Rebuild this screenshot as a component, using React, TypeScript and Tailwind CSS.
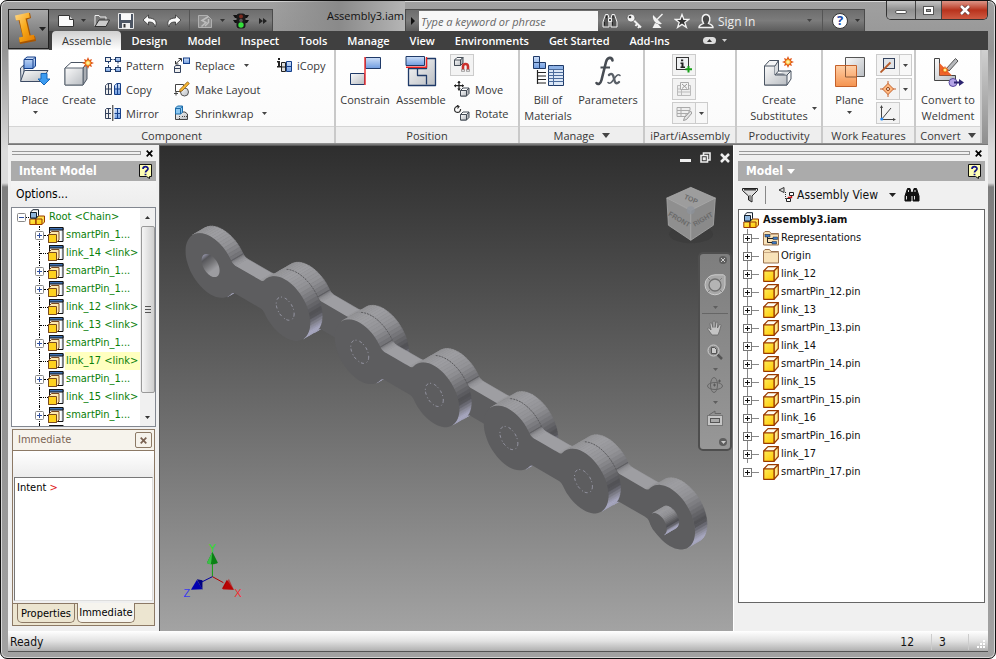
import { useState } from "react";
import type { ReactNode } from "react";
import { clsx } from "clsx";

type IconProps = { className?: string };

const NAVY = "#1f3a68";

/* ---------- shared bits ---------- */

const Caret = ({ className = "text-[#444]" }: IconProps) => (
  <svg viewBox="0 0 5 3" className={clsx("h-[3px] w-[5px] shrink-0", className)} fill="currentColor">
    <path d="M0 0h5L2.500 3z" />
  </svg>
);

const Grad = () => (
  <svg className="absolute h-0 w-0" aria-hidden="true">
    <defs>
      <linearGradient id="blue" x1="0" y1="0" x2="0" y2="1">
        <stop offset="0" stopColor="#cfe0f8" />
        <stop offset="1" stopColor="#6f9ce0" />
      </linearGradient>
      <linearGradient id="steel" x1="0" y1="0" x2="1" y2="1">
        <stop offset="0" stopColor="#fafafa" />
        <stop offset="1" stopColor="#b9bdc2" />
      </linearGradient>
      <linearGradient id="orange" x1="0" y1="0" x2="0" y2="1">
        <stop offset="0" stopColor="#ffcfa6" />
        <stop offset="1" stopColor="#f5934f" />
      </linearGradient>
      <linearGradient id="yellow" x1="0" y1="0" x2="1" y2="1">
        <stop offset="0" stopColor="#ffec5a" />
        <stop offset="1" stopColor="#ffc800" />
      </linearGradient>
      <linearGradient id="gold" x1="0" y1="0" x2="1" y2="1">
        <stop offset="0" stopColor="#ffd98a" />
        <stop offset="0.5" stopColor="#f8a818" />
        <stop offset="1" stopColor="#e07800" />
      </linearGradient>
    </defs>
  </svg>
);

const Spark = ({ x, y, s = 1 }: { x: number; y: number; s?: number }) => (
  <g transform={`translate(${x} ${y}) scale(${s})`}>
    <path d="M0-6 1.300-3 4-4 3-1.300 6 0 3 1.300 4 4 1.300 3 0 6-1.300 3-4 4-3 1.300-6 0-3-1.300-4-4-1.300-3z" fill="#e0571a" />
    <circle r="2.300" fill="#fff2a0" stroke="#f5a623" />
  </g>
);

/* ---------- small ribbon icons (16x16) ---------- */

const Svg16 = ({ children }: { children: ReactNode }) => (
  <svg viewBox="0 0 16 16" className="size-4 shrink-0" fill="none">
    {children}
  </svg>
);

const PatternIcon = () => (
  <Svg16>
    <g stroke={NAVY}>
      <rect x="0.500" y="0.500" width="5" height="4" fill="#eee" />
      <rect x="10.500" y="0.500" width="5" height="4" fill="url(#blue)" />
      <rect x="0.500" y="10.500" width="5" height="4" fill="url(#blue)" />
      <rect x="10.500" y="10.500" width="5" height="4" fill="url(#blue)" />
      <path d="M6 2.500h1.500m1 0H10M3.500 5v1.500m0 1.500V10M13 5v1.500m0 1.500V10M6 12.500h1.500m1 0H10" />
    </g>
  </Svg16>
);

const CopyIcon = () => (
  <Svg16>
    <path d="M1.500 3.500 3 2.500h3.500v11h-6v-9z" fill="#eee" stroke="#33415c" />
    <path d="M10.500 3.500 12 2.500h3.500v11h-6v-9z" fill="url(#blue)" stroke="#16408a" />
    <path d="M.5 8h6M3.500 3v10" stroke="#33415c" />
    <path d="M9.500 8h6M12.500 3v10" stroke="#16408a" />
  </Svg16>
);

const MirrorIcon = () => (
  <Svg16>
    <path d="M6 3.500H1.500l-1 1v9H6M.5 8.500H6M3.500 3.500v10" fill="#eee" stroke="#33415c" />
    <path d="M9.500 3.500h6v10h-6M9.500 8.500h6M12.500 3.500v10" fill="url(#blue)" stroke="#16408a" />
    <path d="M7.800 0v16" stroke="#222" />
  </Svg16>
);

const ReplaceIcon = () => (
  <Svg16>
    <path d="M.5 9.500 2 8.500h4.500v7h-6z" fill="#eee" stroke="#33415c" />
    <path d="M.5 11.500h6" stroke="#33415c" />
    <rect x="9.500" y="1" width="6" height="5.500" fill="url(#blue)" stroke="#16408a" />
    <path d="M2 6.500 7 2M4.500 1.500H7.500v3M1.500 4v3h3" stroke="#333" />
  </Svg16>
);

const LayoutIcon = () => (
  <Svg16>
    <path d="M1.500 3.500h8v7h-8z" fill="#fff" stroke="#444" />
    <path d="M0 12.500h4M2 10.500v4" stroke="#444" />
    <circle cx="10.500" cy="11" r="4" fill="url(#steel)" stroke="#555" />
    <path d="M13.500.8 15.300 2.500 8 10l-2.500.8.6-2.500z" fill="#f7b733" stroke="#8a5a12" strokeWidth="0.800" />
  </Svg16>
);

const ShrinkIcon = () => (
  <Svg16>
    <path d="M1.500 7.500v7h12V9L11 7H8z" fill="url(#steel)" stroke="#444" />
    <path d="M1.500 3 3.500 1h5v6.500L6.500 9h-5z" fill="#8cc7f0" stroke="#1c6ba8" />
    <path d="M1.500 3.500h5V9M6.500 3.500 8.500 1" stroke="#1c6ba8" />
    <path d="M5.500 11v3M8 11.500h5" stroke="#444" strokeDasharray="1 1" />
  </Svg16>
);

const ICopyIcon = () => (
  <Svg16>
    <path d="M5.500 5.500h4v9h-4zM5.500 10h4" fill="#ddd" stroke="#222" />
    <path d="M10.500 4.500h5v10h-5zM10.500 9.500h5" fill="url(#blue)" stroke="#16408a" />
    <path d="M2 1h2v2H2zM1 4h3v5h1.500v1.500H1V9h1V5.500H1z" fill="#222" />
  </Svg16>
);

const MiniCube = ({ x, y }: { x: number; y: number }) => (
  <g transform={`translate(${x} ${y})`} stroke="#444c56" strokeLinejoin="round">
    <path d="M.5 3 3 .5h6L6.500 3v5.500h-6z" fill="#fff" />
    <path d="M6.500 3 9 .5V6L6.500 8.500z" fill="#b5b9be" />
    <path d="M.5 3h6v5.500h-6z" fill="url(#steel)" />
  </g>
);

const MoveIcon = () => (
  <Svg16>
    <MiniCube x={6} y={6.500} />
    <path d="M5 0v9.500M.3 4.700h9.400" stroke="#222" strokeWidth="1.300" />
    <path d="M3.200 2 5 0l1.800 2zM3.200 7.500 5 9.500l1.800-2zM2 3 0 4.700l2 1.800zM8 3l2 1.700-2 1.800z" fill="#222" />
  </Svg16>
);

const RotateIcon = () => (
  <Svg16>
    <MiniCube x={6} y={6.500} />
    <path d="M4 1.500A3 3 0 1 0 6.500 4M3 0l2 1.500L3.500 3.500" stroke="#333" strokeWidth="1.200" />
  </Svg16>
);

const GripSnapIcon = () => (
  <Svg16>
    <MiniCube x={0} y={0} />
    <path d="M9 14V9.500a2.500 2.500 0 0 1 5 0V14" stroke="#c9302c" strokeWidth="2.600" />
    <path d="M7.500 12.500h3v2h-3zM12.500 12.500h3v2h-3z" fill="#ddd" stroke="#777" strokeWidth="0.500" />
  </Svg16>
);

const CreateIPartIcon = () => (
  <Svg16>
    <rect x="0.500" y="0.500" width="12" height="12" fill="#eef0f2" stroke="#333" />
    <path d="M5 2.500h2.200v1.800H5zM4.500 5.500h3v4H9V11H4.500V9.500h1V7h-1z" fill="#222" />
    <path d="M12.500 9v6.500M9.500 12.300H16" stroke="#18a018" strokeWidth="2" />
  </Svg16>
);

const SheetIcon = () => (
  <Svg16>
    <path d="M1.500 4.500h13v10h-13zM1.500 8h13M1.500 11h13M5.500 8v6" stroke="#bbb" fill="#eee" />
    <path d="M4.500 1.500h8v7h-8z" fill="#f3f3f3" stroke="#aaa" />
    <path d="m6 3 5 4.500M11 3 6 7.500" stroke="#999" />
  </Svg16>
);

const EditSheetIcon = () => (
  <Svg16>
    <path d="M1 2.500h13v3H1zM1 5.500h12v3H1zM1 8.500h9v3H1zM5 2.500v9" stroke="#aaa" fill="#eee" />
    <path d="m14.500 6-6 6.500-1 3 3-1L16 8z" fill="#e2e2e2" stroke="#999" />
  </Svg16>
);

const AxisIcon = () => (
  <Svg16>
    <rect x="3.500" y="1.500" width="11" height="10" fill="#dfe3e7" stroke="#33415c" />
    <path d="m.5 15.500 10-10" stroke="#b65a28" strokeWidth="1.800" />
  </Svg16>
);

const PointIcon = () => (
  <Svg16>
    <path d="M8 2.500 13.500 8 8 13.500 2.500 8z" fill="#ffb880" stroke="#c4612a" />
    <circle cx="8" cy="8" r="1.500" fill="#fff" stroke="#8a3c10" />
    <path d="M8 0v3m0 10v3M0 8h3m10 0h3" stroke="#c4612a" />
  </Svg16>
);

const UcsIcon = () => (
  <Svg16>
    <path d="M1.500 1v13.500H15M1.500 14.500 11 3" stroke="#444" />
    <path d="m0 3 1.500-3L3 3zM13 13l3 1.500-3 1.500z" fill="#444" />
    <circle cx="1.800" cy="14" r="1.600" fill="#2a8af0" />
  </Svg16>
);

/* ---------- large ribbon icons (32x32) ---------- */

const Svg32 = ({ children }: { children: ReactNode }) => (
  <svg viewBox="0 0 32 32" className="size-8 shrink-0 overflow-visible" fill="none" strokeLinejoin="round">
    {children}
  </svg>
);

const PlaceIcon = () => (
  <Svg32>
    <path d="M1.500 12 5 9v14l-3 2z" fill="#dfe3e8" stroke="#3b4a63" />
    <path d="M5.500 14.500H29L22 25.500H1.500z" fill="url(#steel)" stroke="#3b4a63" />
    <path d="M5 3.500 8 1h8.500v9L14 12.500H5z" fill="url(#blue)" stroke="#16408a" />
    <path d="M5 3.500h9v9M14 3.500 16.500 1" stroke="#16408a" />
    <path d="M22 17.500h6V23h3l-6 6-6-6h3z" fill="#3c9bf0" stroke="#1666b8" />
  </Svg32>
);

const CreateIcon = () => (
  <Svg32>
    <path d="M2 12 8 6.500h16L20 12v17H2z" fill="#fff" stroke="#4b5563" />
    <path d="m20 12 4-4v15l-4 6z" fill="#a9adb3" stroke="#4b5563" />
    <path d="M2 12h18v17H2z" fill="url(#steel)" stroke="#5b6470" />
    <Spark x={25} y={7} />
  </Svg32>
);

const ConstrainIcon = () => (
  <Svg32>
    <rect x="16.500" y="1.500" width="15" height="11" fill="url(#blue)" stroke={NAVY} />
    <rect x="1.500" y="17.500" width="14" height="11" fill="url(#steel)" stroke={NAVY} />
    <path d="M16 1v28" stroke="#e33" strokeWidth="1.500" />
  </Svg32>
);

const AssembleIcon = () => (
  <Svg32>
    <path d="M3.500 12.500h18v-10h9v27h-27z" fill="url(#steel)" stroke={NAVY} strokeWidth="1.300" />
    <path d="M12.500 12.500v7h9v9" stroke={NAVY} strokeWidth="1.300" />
    <rect x="1" y="0.500" width="18.500" height="9" fill="url(#blue)" stroke={NAVY} />
    <path d="M1 11.300h20.500V1" stroke="#e22" strokeWidth="1.400" />
  </Svg32>
);

const BomIcon = () => (
  <Svg32>
    <path d="M1.500.5h6v6h-6zM1.500 6.500h6v6h-6zM7.500 6.500h6v6h-6z" fill="url(#blue)" stroke={NAVY} />
    <path d="M5.500 14v14M5.500 16.500H14M5.500 20H14M5.500 23.500H14M5.500 27H14" stroke="#222" strokeWidth="1.200" />
    <rect x="16.500" y="9.500" width="15" height="20" fill="#dce8f7" stroke={NAVY} />
    <path d="M16.500 13.500h15M16.500 16.500h15M16.500 19.500h15M16.500 22.500h15M16.500 25.500h15M21.500 9.500v20" stroke="#4b6b9b" />
    <path d="M17 10h14v3H17z" fill="#8fb3e6" />
  </Svg32>
);

// cursive f with a smaller x on its foot
const FxIcon = () => (
  <Svg32>
    <path d="M20.500 4.500C20 1 15.500.5 14 6L9.500 24c-1 4-3.500 5-5 3" stroke="#474c53" strokeWidth="2.600" strokeLinecap="round" />
    <path d="M8.500 11.500H18" stroke="#474c53" strokeWidth="2" />
    <path d="M17 19c3-2.500 4.200-.5 5 3.500s2 6.500 5 3.500" stroke="#5a6068" strokeWidth="2.400" strokeLinecap="round" />
    <path d="M28 19.500c-2-2-4 .5-6 3.500s-4 5.500-6 3.500" stroke="#5a6068" strokeWidth="1.600" strokeLinecap="round" />
  </Svg32>
);

const SubstitutesIcon = () => (
  <Svg32>
    <path d="m1.500 10 5-5.500h9L13.500 10v8h8l3-3h3.500v8l-4 6H1.500z" fill="#f4f5f6" stroke="#4b5563" />
    <path d="M1.500 10h10.500v9h12v10H1.500z" fill="url(#steel)" stroke="#4b5563" />
    <path d="M12 10 15.500 4.500V15L12 19M15.500 15H28l-4 4" stroke="#4b5563" fill="#d9dcdf" />
    <Spark x={25} y={6} />
  </Svg32>
);

const PlaneIcon = () => (
  <Svg32>
    <rect x="11.500" y="1.500" width="19" height="19" fill="url(#steel)" stroke="#555" />
    <rect x="1.500" y="9.500" width="21" height="21" fill="url(#orange)" stroke="#c4612a" />
    <path d="M11.500 10v11h11" stroke="#8a5a3a" />
  </Svg32>
);

const WeldIcon = () => (
  <Svg32>
    <path d="M2.500 2.500h5v17h16v5h-21z" fill="url(#steel)" stroke="#444" />
    <path d="M7.500 7v12.500H20z" fill="#f0642a" />
    <path d="M23.500 2.500 26 5 17 15l-3-2z" fill="#b8babd" stroke="#555" />
    <Spark x={13} y={14} s={0.700} />
    <circle cx="21" cy="26.500" r="4" fill="#b3a3e6" stroke="#5a4aa0" />
    <path d="M22 26.500h8" stroke="#2c2470" strokeWidth="2" />
    <path d="m27 23 5 3.500-5 3.500z" fill="#2c2470" />
  </Svg32>
);

/* ---------- title bar icons ---------- */

const AppLogo = () => (
  <svg viewBox="0 0 28 34" className="h-[34px] w-7" fill="none">
    <path d="M4 4 18 1l1 5-4 1.500 4 17 4-.5 1 5-16 3-1-5 4-1.500L6.500 8 4 8.500z" fill="#a85500" />
    <path d="M3 3.500 17 .5l.8 5-4.300 1 4 17 4.500-.8.800 4.500-15 3-.8-4.700 4-.8L7.500 8 4 8.500z" fill="url(#gold)" />
  </svg>
);

const NewIcon = () => (
  <Svg16>
    <path d="M.5 2.500h11l4 4v7H.5z" fill="#fafafa" stroke="#333" />
    <path d="M11.500 2.500v4h4" fill="#ccc" stroke="#333" />
  </Svg16>
);
const OpenIcon = () => (
  <Svg16>
    <path d="M1 13V2.500h4l1 1.500h6v3" fill="#777" stroke="#eee" />
    <path d="M1 13.500 5 7h10.500L12 13.500z" fill="#ccc" stroke="#333" />
  </Svg16>
);
const SaveIcon = () => (
  <Svg16>
    <path d="M.5.5h15v15h-15z" fill="#4d5664" stroke="#e8e8e8" />
    <path d="M3 1h10v6H3z" fill="#fafafa" />
    <path d="M4 10h8v5.500H4z" fill="#eee" />
    <path d="M5.500 11h2v3.500h-2z" fill="#333" />
  </Svg16>
);
const UndoIcon = () => (
  <Svg16>
    <path d="M6.500 2 1 7l5.500 5V9c4 0 6 1 6.500 5 3-5 0-9-6.500-9z" fill="#fafafa" stroke="#333" strokeWidth="0.800" />
  </Svg16>
);
const RedoIcon = () => (
  <Svg16>
    <path d="M9.500 2 15 7l-5.500 5V9c-4 0-6 1-6.500 5-3-5 0-9 6.500-9z" fill="#fafafa" stroke="#333" strokeWidth="0.800" />
  </Svg16>
);
const UpdateIcon = () => (
  <Svg16>
    <path d="M1.500 2.500h9l4 4v8h-13z" fill="#8c8c8c" stroke="#b0b0b0" />
    <path d="M11.500 3.500 5 7.500l4 2-4.500 4M11.500 6v3.500L8 13" stroke="#bdbdbd" strokeWidth="1.500" />
  </Svg16>
);
const TrafficIcon = () => (
  <Svg16>
    <path d="M0 2h4v3H2zM16 2h-4v3h2zM0 7h4v3H2zM16 7h-4v3h2z" fill="#111" />
    <rect x="3.500" y="0.500" width="9" height="15" rx="3" fill="#1a1a1a" />
    <circle cx="8" cy="3.500" r="2" fill="#7a2b20" />
    <circle cx="8" cy="7.500" r="1.800" fill="#555" />
    <circle cx="8" cy="12" r="2.700" fill="#35e03c" />
  </Svg16>
);
const BinocularsIcon = ({ dark }: { dark?: boolean }) => (
  <Svg16>
    <g fill={dark ? "#111" : "#555"} stroke={dark ? "#111" : "#f2f2f2"}>
      <path d="M3.500 1.500h2.500l1 4v8.500H1V9zM12.500 1.500H10l-1 4v8.500h6V9z" />
      <path d="M6.500 5.500h3v3h-3z" />
    </g>
    <path d="M2.500 9v3.500M10.500 9v3.500M4.500 3v2M11 3v2" stroke={dark ? "#ddd" : "#222"} />
  </Svg16>
);
const KeyIcon = () => (
  <Svg16>
    <path d="m7.500 7 7.500 7.500M11 11l-1.500 2M13.500 13l-1.500 2" stroke="#f2f2f2" strokeWidth="2" />
    <circle cx="5" cy="5" r="4" fill="#f2f2f2" stroke="#444" strokeWidth="0.600" />
    <circle cx="4" cy="4" r="1.300" fill="#444" />
  </Svg16>
);
const DishIcon = () => (
  <Svg16>
    <path d="M3 2c-1 5 3 10 9 9z" fill="#f2f2f2" />
    <path d="M7 6.500 12.500 1" stroke="#f2f2f2" strokeWidth="1.500" />
    <path d="M5 10 2.500 15h9L8 11" fill="#f2f2f2" />
  </Svg16>
);
const StarIcon = () => (
  <Svg16>
    <path d="m8 1.500 1.800 4.800h5L10.800 9.400l1.600 5L8 11.400l-4.400 3 1.600-5-4-3.100h5z" fill="#333" stroke="#f2f2f2" strokeWidth="1.300" />
  </Svg16>
);
const UserIcon = () => (
  <Svg16>
    <path d="M1 14.500c0-3 3-3 4.500-4C3 7 4 1.500 8 1.500S13 7 10.500 10.500c1.500 1 4.500 1 4.500 4z" fill="#4a4a4a" stroke="#f2f2f2" strokeWidth="1.400" />
  </Svg16>
);

/* ---------- tree icons ---------- */

const PartIcon = () => (
  <Svg16>
    <g stroke="#9a3a00" strokeLinejoin="round" strokeWidth="1.200">
      <path d="M.7 5 5 .7h10.300L11 5z" fill="#fffdf0" />
      <path d="m11 5 4.300-4.300V10.500L11 15.300z" fill="#ffe98a" />
      <path d="M.7 5H11v10.300H.7z" fill="url(#yellow)" />
    </g>
  </Svg16>
);

const AssemblyIcon = () => (
  <Svg16>
    <g strokeLinejoin="round">
      <path d="M6 9.500 8.500 7h7v6L13 15.500H6z" fill="#ffe14d" stroke="#9a3a00" />
      <path d="M.8 10h6v5.500h-6zM7 10h6v5.500H7z" fill="url(#yellow)" stroke="#9a3a00" />
      <path d="M1.500 3 4 .7h5.500V6.500L7.500 9h-6z" fill="#fff" stroke="#15202e" />
      <path d="M1.500 3.500h6V9h-6z" fill="#8fb6dd" stroke="#15202e" />
    </g>
  </Svg16>
);

const FolderIcon = ({ reps }: { reps?: boolean }) => (
  <Svg16>
    <path d="M.5 15V3L2 1.500h4.500L8 3.500h7.500V15z" fill="#f8e2b8" stroke="#9a7350" />
    <path d="M1 4.500h14.500" stroke="#c9a987" />
    {reps && (
      <>
        <path d="M4.500 6v6.500H9M4.500 8.500H10" stroke="#222" />
        <path d="M2 4.500h5v2.500H2zM10 7h4.500v2.500H10zM9 11.500h4.500V14H9z" fill="#3b79c9" stroke="#222" strokeWidth="0.500" />
      </>
    )}
  </Svg16>
);

const IntentIcon = () => (
  <Svg16>
    <path d="M1.500.5h13.500v14H1.500z" fill="#e8edf6" stroke="#111" />
    <path d="M1.500.5h13.500v2.500H1.500z" fill="#3f72b5" stroke="#111" />
    <path d="M11 4h2v10h-2z" fill="#fff" />
    <path d="M.5 7.500 3.500 4.500h7.500v8.500l-2.500 2.500h-8z" fill="#ffe9b0" stroke="#7a4a20" />
    <path d="M.5 7.500h8v8h-8z" fill="#ffd21f" stroke="#7a4a20" />
  </Svg16>
);

const HelpNote = () => (
  <svg viewBox="0 0 14 15" className="h-[15px] w-3.5" fill="none">
    <path d="M.5.5h12v12h-2v2l-3-2h-7z" fill="#ffffb4" stroke="#111" />
    <path d="M4 5c0-3 5-3 5-.3C9 6.500 6.500 6.500 6.500 8.500" stroke="#14148a" strokeWidth="1.700" />
    <path d="M5.600 9.700h1.800v1.600H5.600z" fill="#14148a" />
  </svg>
);

const CloseX = ({ className = "text-black" }: IconProps) => (
  <svg viewBox="0 0 7 7" className={clsx("size-[7px]", className)} fill="none" stroke="currentColor" strokeWidth="1.700">
    <path d="m.7.700 5.600 5.600M6.300.7.700 6.300" />
  </svg>
);

/* ---------- ribbon pieces ---------- */

interface LargeProps {
  icon: ReactNode;
  lines: string[];
  caret?: boolean;
  className?: string;
}

const LargeButton = ({ icon, lines, caret, className }: LargeProps) => (
  <button className={clsx("flex shrink-0 flex-col items-center pt-[6px] leading-4", className)}>
    {icon}
    <span className="mt-1 whitespace-nowrap text-center">
      {lines.map((line) => (
        <span key={line} className="block">
          {line}
        </span>
      ))}
    </span>
    {caret && <Caret className="mt-[3px] text-[#444]" />}
  </button>
);

const SmallButton = ({ icon, label, caret }: { icon: ReactNode; label: string; caret?: boolean }) => (
  <button className="flex h-6 items-center gap-[5px] whitespace-nowrap">
    {icon}
    <span className="pt-0.5">{label}</span>
    {caret && <Caret className="ml-1 text-[#444]" />}
  </button>
);

const BoxButton = ({ icon, label, caret }: { icon: ReactNode; label: string; caret?: boolean }) => (
  <div className="flex h-6 items-center">
    <button aria-label={label} className="flex h-[22px] w-6 items-center justify-center border border-[#ccc] bg-[#f3f3f3]">
      {icon}
    </button>
    {caret && (
      <button aria-label={`${label} options`} className="flex h-[22px] w-3 items-center justify-center border border-l-0 border-[#ccc] bg-[#f8f8f8]">
        <Caret />
      </button>
    )}
  </div>
);

const Panel = ({ title, caret, className, children }: { title: string; caret?: boolean; className: string; children: ReactNode }) => (
  <section className={clsx("flex shrink-0 flex-col border-r-2 border-[#c9c9c9]", className)}>
    <div className="flex h-[76px] bg-linear-to-b from-white to-[#fbfbfb]">{children}</div>
    <h2 className="flex h-[17px] items-center justify-center gap-[7px] whitespace-nowrap border-t border-[#d5d5d5] bg-[#eee]">
      <span className="pt-0.5">{title}</span>
      {caret && (
        <svg viewBox="0 0 8 5" className="h-[5px] w-2" fill="#444">
          <path d="M0 0h8L4 5z" />
        </svg>
      )}
    </h2>
  </section>
);

const Ribbon = () => (
  <div className="flex h-[95px] shrink-0 overflow-hidden border-b border-[#777] bg-[#b5b5b5] bg-linear-to-b from-[#d0d0d0] to-[#8e8e8e] pb-px pl-px text-[11px] text-[#383838]">
    <Panel title="Component" className="w-[327px]">
      <LargeButton icon={<PlaceIcon />} lines={["Place"]} caret className="ml-1 w-11" />
      <LargeButton icon={<CreateIcon />} lines={["Create"]} className="w-11" />
      <div className="ml-1 w-[69px] pt-[3px]">
        <SmallButton icon={<PatternIcon />} label="Pattern" />
        <SmallButton icon={<CopyIcon />} label="Copy" />
        <SmallButton icon={<MirrorIcon />} label="Mirror" />
      </div>
      <div className="w-[102px] pt-[3px]">
        <SmallButton icon={<ReplaceIcon />} label="Replace" caret />
        <SmallButton icon={<LayoutIcon />} label="Make Layout" />
        <SmallButton icon={<ShrinkIcon />} label="Shrinkwrap" caret />
      </div>
      <div className="pt-[3px]">
        <SmallButton icon={<ICopyIcon />} label="iCopy" />
      </div>
    </Panel>
    <Panel title="Position" className="w-[184px]">
      <LargeButton icon={<ConstrainIcon />} lines={["Constrain"]} className="ml-px w-14" />
      <LargeButton icon={<AssembleIcon />} lines={["Assemble"]} className="w-14" />
      <div className="ml-px pt-[3px]">
        <BoxButton icon={<GripSnapIcon />} label="Grip Snap" />
        <div className="ml-1">
          <SmallButton icon={<MoveIcon />} label="Move" />
          <SmallButton icon={<RotateIcon />} label="Rotate" />
        </div>
      </div>
    </Panel>
    <Panel title="Manage" caret className="w-[125px]">
      <LargeButton icon={<BomIcon />} lines={["Bill of", "Materials"]} className="w-14" />
      <LargeButton icon={<FxIcon />} lines={["Parameters"]} className="w-16" />
    </Panel>
    <Panel title="iPart/iAssembly" className="w-[92px]">
      <div className="ml-[27px] pt-[3px]">
        <BoxButton icon={<CreateIPartIcon />} label="Create iPart" />
        <BoxButton icon={<SheetIcon />} label="Edit using spreadsheet" />
        <BoxButton icon={<EditSheetIcon />} label="Edit member" caret />
      </div>
    </Panel>
    <Panel title="Productivity" className="w-[86px]">
      <LargeButton icon={<SubstitutesIcon />} lines={["Create", "Substitutes"]} className="ml-2 w-[68px]" />
      <Caret className="-ml-px mt-[57px] text-[#444]" />
    </Panel>
    <Panel title="Work Features" className="w-[93px]">
      <LargeButton icon={<PlaneIcon />} lines={["Plane"]} caret className="w-[53px]" />
      <div className="pt-[3px]">
        <BoxButton icon={<AxisIcon />} label="Axis" caret />
        <BoxButton icon={<PointIcon />} label="Point" caret />
        <BoxButton icon={<UcsIcon />} label="UCS" />
      </div>
    </Panel>
    <Panel title="Convert" caret className="w-[66px]">
      <LargeButton icon={<WeldIcon />} lines={["Convert to", "Weldment"]} className="w-16" />
    </Panel>
  </div>
);

/* ---------- title bar and tabs ---------- */

const tabs = ["Assemble", "Design", "Model", "Inspect", "Tools", "Manage", "View", "Environments", "Get Started", "Add-Ins"];

const toolStrip = "mt-2 flex h-[22px] items-center bg-linear-to-b from-[#6d6d6d] via-[#7c7c7c] to-[#5c5c5c] border-t border-[#4a4a4a]";

const Header = () => {
  const [active, setActive] = useState("Assemble");

  return (
    <header className="flex h-[49px] shrink-0">
      <button
        aria-label="Application menu"
        className="mt-2 flex h-10 w-[41px] shrink-0 items-center border border-[#222] bg-linear-to-b from-[#a8a8a8] to-[#686868] pl-[3px]"
      >
        <AppLogo />
        <svg viewBox="0 0 7 4" className="-ml-px h-1 w-[7px]" fill="#222">
          <path d="M0 0h7L3.500 4z" />
        </svg>
      </button>
      <div className="flex min-w-0 flex-1 flex-col">
        <div className="flex h-[30px] items-start">
          <div className={clsx(toolStrip, "w-56 shrink-0 border-r pl-[9px]")}>
            <button aria-label="New"><NewIcon /></button>
            <Caret className="ml-[7px] text-[#333]" />
            <button aria-label="Open" className="ml-2"><OpenIcon /></button>
            <button aria-label="Save" className="ml-2"><SaveIcon /></button>
            <button aria-label="Undo" className="ml-2"><UndoIcon /></button>
            <button aria-label="Redo" className="ml-2"><RedoIcon /></button>
            <span className="ml-[7px] h-full w-px bg-[#555]" />
            <button aria-label="Update" className="ml-[7px]"><UpdateIcon /></button>
            <Caret className="ml-[7px] text-[#333]" />
            <button aria-label="Rebuild" className="ml-2"><TrafficIcon /></button>
            <svg viewBox="0 0 8 6" className="ml-2.5 h-1.5 w-2" fill="#222">
              <path d="M0 0l4 3-4 3zM4 0l4 3-4 3z" />
            </svg>
          </div>
          <div className="flex h-full flex-1 justify-end bg-linear-to-r from-transparent via-[#8a8a8a] to-[#b5b5b5] pr-px pt-[7px] text-[11px] text-[#111]">
            Assembly3.iam
          </div>
          <div className={clsx(toolStrip, "w-[460px] shrink-0 border-x")}>
            <svg viewBox="0 0 4 8" className="ml-[5px] mr-1 h-2 w-1" fill="#111">
              <path d="M0 0l4 4-4 4z" />
            </svg>
            <input
              type="text"
              aria-label="Search help"
              placeholder="Type a keyword or phrase"
              className="h-5 w-[179px] bg-[#f7f7f7] px-[2px] pt-0.5 text-[11px] italic placeholder:text-[#666]"
            />
            <button aria-label="Search" className="ml-1"><BinocularsIcon /></button>
            <button aria-label="Subscription" className="ml-2"><KeyIcon /></button>
            <button aria-label="Communication" className="ml-2"><DishIcon /></button>
            <button aria-label="Favorites" className="ml-2"><StarIcon /></button>
            <button className="ml-2 flex items-center gap-1 text-[12px] text-[#eee]">
              <UserIcon />
              <span className="pt-0.5">Sign In</span>
            </button>
            <Caret className="ml-auto mr-2.5 text-[#444]" />
            <span className="h-full w-px bg-[#555]" />
            <button
              aria-label="Help"
              className="ml-[9px] flex size-4 items-center justify-center rounded-full border border-[#333] bg-white text-[13px] font-bold leading-none text-[#1c4aa8]"
            >
              ?
            </button>
            <Caret className="ml-[7px] mr-1 text-[#333]" />
          </div>
          <div className="ml-[21px] flex h-[19px] w-[102px] shrink-0 overflow-hidden rounded-b-[5px] border border-t-0 border-[#333]">
            <button aria-label="Minimize" className="flex w-[29px] items-center justify-center border-r border-[#444] bg-linear-to-b from-[#c4c4c4] via-[#8f8f8f] to-[#a5a5a5]">
              <span className="mt-1 h-1 w-3 rounded-sm border border-[#555] bg-white" />
            </button>
            <button aria-label="Maximize" className="flex w-[26px] items-center justify-center border-r border-[#444] bg-linear-to-b from-[#c4c4c4] via-[#8f8f8f] to-[#a5a5a5]">
              <span className="flex h-[9px] w-[11px] items-center justify-center border border-[#555] bg-white">
                <span className="h-[3px] w-[5px] border border-[#555] bg-[#999]" />
              </span>
            </button>
            <button aria-label="Close" className="flex flex-1 items-center justify-center bg-linear-to-b from-[#dc9486] via-[#b8321c] to-[#cf5a42]">
              <svg viewBox="0 0 12 10" className="h-2.5 w-3" fill="none">
                <path d="m2 1 8 8M10 1 2 9" stroke="#5b3a36" strokeWidth="4" />
                <path d="m2 1 8 8M10 1 2 9" stroke="#fff" strokeWidth="2.500" />
              </svg>
            </button>
          </div>
        </div>
        <nav className="flex h-[19px] items-center bg-[#404040] pl-[3px] text-[11px] font-semibold text-white">
          {tabs.map((tab) => (
            <button
              key={tab}
              onClick={() => setActive(tab)}
              className={clsx(
                "h-full whitespace-nowrap px-[10px] pt-0.5",
                tab === active && "rounded-t-sm bg-linear-to-b from-[#d0d0d0] to-white font-normal text-[#333]"
              )}
            >
              {tab}
            </button>
          ))}
          <button aria-label="Minimize ribbon" className="ml-[23px] flex h-[7px] w-[13px] items-center justify-center rounded-sm bg-[#ddd]">
            <Caret className="rotate-180 text-[#333]" />
          </button>
          <Caret className="ml-1.5 text-[#ccc]" />
        </nav>
      </div>
    </header>
  );
};

/* ---------- side panels ---------- */

const Grip = () => (
  <div className="flex h-4 shrink-0 items-center gap-[5px] pl-1 pr-[6px]">
    <div className="flex flex-1 flex-col gap-0.5 border-r border-[#999]">
      <span className="h-px bg-[#999]" />
      <span className="h-px bg-[#999]" />
    </div>
    <button aria-label="Close panel">
      <CloseX />
    </button>
  </div>
);

const PanelTitle = ({ title, caret }: { title: string; caret?: boolean }) => (
  <div className="mx-[3px] flex h-5 shrink-0 items-center bg-[#ababab] pl-2 pr-[3px] text-[12px] font-bold text-white">
    {title}
    {caret && (
      <svg viewBox="0 0 8 5" className="ml-1 h-[5px] w-2" fill="#fff">
        <path d="M0 0h8L4 5z" />
      </svg>
    )}
    <button aria-label={`${title} help`} className="ml-auto">
      <HelpNote />
    </button>
  </div>
);

const Expander = ({ sign, soft, className }: { sign: "+" | "-"; soft?: boolean; className: string }) => (
  <svg viewBox="0 0 9 9" className={clsx("relative size-[9px] shrink-0", className)} fill="none">
    <rect x="0.500" y="0.500" width="8" height="8" rx={soft ? 1 : 0} fill="#fff" stroke="currentColor" />
    <path d={sign === "+" ? "M2 4.500h5M4.500 2v5" : "M2 4.500h5"} stroke={soft ? "#2f4f9f" : "#111"} />
  </svg>
);

const intentNodes = [
  { name: "smartPin_1...", open: true },
  { name: "link_14 <link>" },
  { name: "smartPin_1...", open: true },
  { name: "smartPin_1...", open: true },
  { name: "link_12 <link>" },
  { name: "link_13 <link>" },
  { name: "smartPin_1...", open: true },
  { name: "link_17 <link>", selected: true },
  { name: "smartPin_1...", open: true },
  { name: "link_15 <link>" },
  { name: "smartPin_1...", open: true },
  { name: "" },
];

const IntentTree = () => (
  <div className="mx-[3px] flex h-[220px] shrink-0 border border-[#828790] bg-white">
    <ul className="min-w-0 flex-1 overflow-hidden text-[11px] leading-[18px] text-[#0a800a]">
      <li className="flex h-[18px] items-center whitespace-nowrap pl-[5px]">
        <Expander sign="-" soft className="text-[#888]" />
        <span className="w-[3px] border-t border-dotted border-black" />
        <AssemblyIcon />
        <span className="ml-1">Root &lt;Chain&gt;</span>
      </li>
      {intentNodes.map((node, i) => (
        <li key={i} className="ml-[27px] flex h-[18px] items-center whitespace-nowrap border-l border-dotted border-black">
          {node.open ? (
            <>
              <Expander sign="+" soft className="-ml-[5px] text-[#888]" />
              <span className="w-1 border-t border-dotted border-black" />
            </>
          ) : (
            <span className="w-2 border-t border-dotted border-black" />
          )}
          <IntentIcon />
          <span className={clsx("ml-px h-full flex-1 pl-px", node.selected && "bg-[#ffffbf]")}>{node.name}</span>
        </li>
      ))}
    </ul>
    <div className="flex w-[15px] shrink-0 flex-col items-center bg-[#f0f0f0]">
      <button aria-label="Scroll up" className="flex h-[18px] items-center">
        <Caret className="rotate-180 text-[#333]" />
      </button>
      <div className="flex h-[167px] w-[14px] flex-col items-center justify-center gap-0.5 rounded-[2px] border border-[#999] bg-linear-to-r from-[#f5f5f5] to-[#cfcfcf]">
        <span className="h-px w-1.5 bg-[#555]" />
        <span className="h-px w-1.5 bg-[#555]" />
        <span className="h-px w-1.5 bg-[#555]" />
      </div>
      <button aria-label="Scroll down" className="mt-auto flex h-[18px] items-center">
        <Caret className="text-[#333]" />
      </button>
    </div>
  </div>
);

const ImmediatePanel = () => (
  <div className="mx-1 mb-[5px] mt-[2px] flex min-h-0 flex-1 flex-col border border-[#8c7965] bg-[#f0f0f0] text-[11px]">
    <div className="flex h-[21px] items-center justify-between border-b border-[#8c7965] bg-[#f6f3ec] pl-[5px] pr-0.5 text-[#7a6252]">
      Immediate
      <button aria-label="Close Immediate" className="flex h-4 w-[17px] items-center justify-center rounded-[2px] border border-[#8c7965]">
        <CloseX className="text-[#7a6252]" />
      </button>
    </div>
    <div className="h-[26px] bg-linear-to-b from-white to-[#ececec]" />
    <div className="mx-px flex min-h-0 flex-1 border border-b-[#ddd] border-l-[#777] border-r-[#ddd] border-t-[#777] bg-white pl-0.5 pt-0.5 leading-4">
      <label htmlFor="intent" className="text-black">
        Intent <span className="text-[#e02020]">&gt;</span>
      </label>
      <input id="intent" type="text" className="h-4 min-w-0 flex-1 outline-none" />
    </div>
    <div className="mt-0.5 flex h-[22px] items-start border-t border-[#8c7965] bg-[#ece5d0] pl-1">
      <button className="h-[19px] w-[58px] rounded-b-[5px] border border-t-0 border-[#8c7965] pt-0.5">Properties</button>
      <button className="-mt-px ml-0.5 h-5 w-[58px] rounded-b-[5px] border border-t-0 border-[#8c7965] bg-[#f6f4ee] pt-0.5">Immediate</button>
    </div>
  </div>
);

const modelNodes = [
  { name: "Representations", icon: <FolderIcon reps /> },
  { name: "Origin", icon: <FolderIcon /> },
  ...["12", "13", "14", "15", "16", "17"].flatMap((n) => [
    { name: `link_${n}`, icon: <PartIcon /> },
    { name: `smartPin_${n}.pin`, icon: <PartIcon /> },
  ]),
];

const ModelPanel = () => (
  <aside className="flex w-[255px] shrink-0 flex-col border-l border-white bg-[#f0f0f0] pl-px">
    <Grip />
    <PanelTitle title="Model" caret />
    <div className="flex h-7 shrink-0 items-center pl-[7px] text-[12px] text-[#111]">
      <button aria-label="Filter">
        <Svg16>
          <path d="M.5 1.500h15v2L10 9v6L6.500 13V9L.5 3.500z" fill="#ddd" stroke="#222" />
          <path d="M2 2h12v1.500H2z" fill="#444" />
          <path d="M8 8v6" stroke="#444" />
        </Svg16>
      </button>
      <span className="ml-[7px] h-[18px] w-px bg-[#888]" />
      <button className="ml-3 flex items-center gap-[3px]">
        <Svg16>
          <path d="M1 3 6 .5v5z" fill="#ddd" stroke="#333" />
          <path d="M7.500 5v7h1" stroke="#333" strokeDasharray="1 1" />
          <path d="M13.500 6.500v4h-3V13" stroke="#d01818" strokeWidth="1.400" />
          <path d="M11.500 5.500h4v3h-4zM8.500 11.500h4v3h-4z" fill="#fff" stroke="#222" />
        </Svg16>
        <span>Assembly View</span>
        <svg viewBox="0 0 7 4" className="ml-2 h-1 w-[7px]" fill="#222">
          <path d="M0 0h7L3.500 4z" />
        </svg>
      </button>
      <button aria-label="Find" className="ml-2">
        <BinocularsIcon dark />
      </button>
    </div>
    <div className="mx-[3px] mb-7 flex-1 border border-[#666] bg-white">
      <ul className="pl-1 pt-px text-[11px] leading-[18px] text-[#111]">
        <li className="flex h-[18px] items-center gap-1 font-bold">
          <AssemblyIcon />
          Assembly3.iam
        </li>
        {modelNodes.map((node, i) => (
          <li
            key={node.name}
            className={clsx("ml-1 flex h-[18px] items-center border-l", i === modelNodes.length - 1 ? "border-transparent" : "border-[#888]")}
          >
            <Expander sign="+" className="-ml-[5px] text-[#777]" />
            <span className="mr-1 h-px w-[7px] bg-[#888]" />
            {node.icon}
            <span className="ml-0.5">{node.name}</span>
          </li>
        ))}
      </ul>
    </div>
  </aside>
);

/* ---------- 3D chain ---------- */

type Pt = [number, number];

const HUB = 29;
const DEPTH: Pt = [12, -7];
const pins: Pt[] = Array.from({ length: 7 }, (_, i) => [210.7 + 74.7 * i, 265.300 + 43.200 * i]);

// normal angle (degrees clockwise from straight up) -> shade
const shades: [number, number[]][] = [
  [-180, [120, 120, 130]],
  [-60, [134, 134, 136]],
  [-30, [150, 150, 153]],
  [0, [158, 158, 162]],
  [30, [146, 146, 150]],
  [55, [112, 112, 116]],
  [78, [77, 77, 81]],
  [98, [138, 138, 152]],
  [114, [170, 170, 196]],
  [180, [150, 150, 170]],
];

const shade = (deg: number) => {
  const i = Math.max(1, shades.findIndex(([d]) => d >= deg));
  const [d0, c0] = shades[i - 1];
  const [d1, c1] = shades[i];
  const t = (deg - d0) / (d1 - d0);
  return `rgb(${c0.map((c, k) => Math.round(c + (c1[k] - c) * t)).join(",")})`;
};

const arc = (cx: number, cy: number, r: number, from: number, to: number, steps: number): Pt[] =>
  Array.from({ length: steps + 1 }, (_, i) => {
    const a = ((from + ((to - from) * i) / steps) * Math.PI) / 180;
    return [cx + r * Math.cos(a), cy + r * Math.sin(a)];
  });

// link outline in its own plane, clockwise from the left hub
const LEN = 86.2;
const linkOutline: Pt[] = [
  ...arc(28.7, -20, 6, 145, 90, 6),
  ...arc(LEN - 28.7, -20, 6, 90, 35, 6),
  ...arc(LEN, 0, HUB, -145, 145, 48),
  ...arc(LEN - 28.7, 20, 6, -35, -90, 6),
  ...arc(28.7, 20, 6, -90, -145, 6),
  ...arc(0, 0, HUB, 35, 325, 48),
];
const circleOutline = (r: number) => arc(0, 0, r, 0, 360, 48);

const project = ([u, v]: Pt, [ox, oy]: Pt): Pt => [ox + u * 0.866, oy + u * 0.5 + v];
const points = (list: Pt[]) => list.map(([x, y]) => `${x.toFixed(1)},${y.toFixed(1)}`).join(" ");

const Solid = ({ outline, origin }: { outline: Pt[]; origin: Pt }) => {
  const face = outline.map((p) => project(p, origin));

  return (
    <g>
      {outline.map((p, i) => {
        const j = (i + 1) % outline.length;
        const [a, b] = [face[i], face[j]];
        const facing = (b[1] - a[1]) * DEPTH[0] - (b[0] - a[0]) * DEPTH[1];
        if (facing <= 0.01) return null;

        const du = outline[j][0] - p[0];
        const dv = outline[j][1] - p[1];
        const fill = shade((Math.atan2(dv, du) * 180) / Math.PI);
        return (
          <polygon
            key={i}
            points={points([a, b, [b[0] + DEPTH[0], b[1] + DEPTH[1]], [a[0] + DEPTH[0], a[1] + DEPTH[1]]])}
            fill={fill}
            stroke={fill}
            strokeWidth="0.600"
          />
        );
      })}
      <polygon points={points(face)} fill="#5d5d5f" />
    </g>
  );
};

const Chain = () => (
  <g>
    {[1, 3, 5].map((i) => (
      <Solid key={i} outline={linkOutline} origin={[pins[i][0] + DEPTH[0], pins[i][1] + DEPTH[1]]} />
    ))}
    {[0, 2, 4].map((i) => (
      <Solid key={i} outline={linkOutline} origin={pins[i]} />
    ))}
    <Solid outline={circleOutline(10)} origin={pins[6]} />
    <polygon points={points(circleOutline(10.4).map((p) => project(p, pins[0])))} fill="url(#bore)" />
    {pins.slice(1, 6).map((pin, i) => (
      <g key={i} fill="none">
        <polyline
          points={points(arc(0, 0, HUB, -115, -32, 20).map((p) => project(p, [pin[0] + DEPTH[0], pin[1] + DEPTH[1]])))}
          stroke="#5a5a5d"
          strokeDasharray="2 1"
        />
        <polyline
          points={points(circleOutline(10.4).map((p) => project(p, pin)))}
          stroke="#a5a5b5"
          strokeWidth="0.800"
          strokeDasharray="3 2 1 3"
        />
      </g>
    ))}
  </g>
);

const ViewCube = () => (
  <g>
    <ellipse cx="692" cy="234" rx="22" ry="9" fill="#333" opacity="0.350" />
    <g transform="translate(1 0)">
      <g stroke="#a8a8a8" strokeLinejoin="round" strokeWidth="0.800">
        <path d="m690.700 187 24.600 10.700-24.600 12.500-24-12.500z" fill="#9d9d9d" />
        <path d="m666.700 197.700 24 12.500V240l-22.400-15z" fill="#8f8f8f" />
        <path d="m715.300 197.700-24.600 12.500V240l22.600-15z" fill="#8a8a8a" />
      </g>
      <circle cx="690.700" cy="210" r="4" fill="#8d939b" opacity="0.700" />
      <g fontFamily="Liberation Sans, sans-serif" fontSize="7" fontWeight="bold" fill="#6a6a6a" textAnchor="middle">
        <text transform="translate(690 201) rotate(24)">TOP</text>
        <text transform="translate(678 221) rotate(30)">FRONT</text>
        <text transform="translate(704 221) rotate(-30)">RIGHT</text>
      </g>
    </g>
  </g>
);

const Triad = () => (
  <g>
    <path d="M212.500 577v-14" stroke="#12a012" />
    <path d="m212.500 577 11 6" stroke="#b00000" />
    <path d="m212.500 577-12 6" stroke="#0000a0" />
    <path d="m212.500 552-5.500 11c2 2 9 2 11 0z" fill="#0a8014" />
    <path d="m212.500 552-5.500 11c1 1 2 1.500 4 1.500z" fill="#3cc048" />
    <path d="m234 590-7-10-5 9z" fill="#b00000" />
    <path d="m229 579 5 11-11 0z" fill="#c00808" opacity="0.600" />
    <path d="m191 590 6-10 5.500 9.500z" fill="#0000b0" />
    <path d="m197 579.500 5.500 1v9.500z" fill="#000080" />
    <g fontFamily="Liberation Sans, sans-serif" fontSize="11" textAnchor="middle">
      <text x="212.500" y="552" fill="#28e028">Y</text>
      <text x="238" y="597" fill="#f03030">X</text>
      <text x="187" y="597" fill="#3a3aee">Z</text>
    </g>
  </g>
);

const NavBar = () => (
  <div className="absolute right-px top-[106px] flex h-[199px] w-[34px] flex-col items-center rounded-[5px] border-2 border-[#4e4e4e] bg-linear-to-b from-[#7e7e7e] to-[#979797] text-[#5e5e5e]">
    <button aria-label="Close navigation bar" className="mr-[3px] mt-[2px] flex size-2 items-center justify-center self-end rounded-full bg-[#5e5e5e]">
      <svg viewBox="0 0 4 4" className="size-1" stroke="#ccc"><path d="m0 0 4 4M4 0 0 4" /></svg>
    </button>
    <button aria-label="Steering wheel" className="mt-[10px]">
      <svg viewBox="0 0 22 22" className="size-[22px]" fill="none">
        <path d="M11 .8H19.500L21 2.300V11A10 10 0 1 1 11 .8z" fill="#a8a8a8" stroke="#cdcdcd" />
        <circle cx="11" cy="11" r="6" fill="#b4b4b4" stroke="#707070" strokeWidth="1.300" />
        <path d="m4 4 3 3M4 18l3-3M18 18l-3-3M18 4l-3 3" stroke="#808080" />
      </svg>
    </button>
    <Caret className="mt-[10px]" />
    <span className="mt-1 h-px w-[26px] bg-[#666]" />
    <button aria-label="Pan" className="mt-[6px]">
      <Svg16>
        <path d="M5 15 1 9.500c-.8-1.300.7-2 1.600-1L4 10 3 4c-.2-1.500 1.500-1.800 1.900-.3L6 7.500V2c0-1.500 2-1.500 2 0v5.500l1-4.700c.3-1.400 2-1.100 1.800.4L10.500 8l1.600-3c.8-1.200 2.200-.5 1.800.8L12.500 11 11 15z" fill="#c4c4c4" stroke="#666" strokeWidth="0.800" />
      </Svg16>
    </button>
    <button aria-label="Zoom" className="mt-2">
      <Svg16>
        <path d="m10.500 10.500 4.500 4.500" stroke="#555" strokeWidth="2.500" />
        <circle cx="6.500" cy="6.500" r="5.500" fill="#8c8c8c" stroke="#d0d0d0" />
        <path d="M4.500 3.500h3l2 2v4h-5z" fill="#ccc" stroke="#555" />
      </Svg16>
    </button>
    <Caret className="mt-2" />
    <button aria-label="Orbit" className="mt-[6px]">
      <Svg16>
        <ellipse cx="8" cy="9" rx="7.500" ry="3.500" stroke="#666" />
        <ellipse cx="7" cy="8" rx="3.500" ry="7.500" stroke="#666" />
        <path d="M6 8h3M7.500 6.500v3M11 4h3M12.500 2.500v3" stroke="#5a5a5a" />
      </Svg16>
    </button>
    <Caret className="mt-2" />
    <button aria-label="Look at" className="mt-[6px]">
      <Svg16>
        <path d="M2 5 8 1v2.500h6" stroke="#666" />
        <rect x="0.500" y="5.500" width="15" height="10" fill="#c6c6c6" stroke="#777" />
        <rect x="3.500" y="8.500" width="9" height="4" fill="#aaa" stroke="#555" />
      </Svg16>
    </button>
    <span className="mb-[3px] mr-[3px] mt-auto flex size-2 items-center justify-center self-end rounded-full bg-[#5e5e5e]">
      <Caret className="text-[#ccc]" />
    </span>
  </div>
);

const Viewport = () => (
  <main className="relative min-w-0 flex-1 overflow-hidden border-l border-t border-[#5a5a5a] bg-linear-to-b from-[#2e2e2e] to-[#a3a3a3]">
    <svg viewBox="160 146 574 485" className="h-full w-full" fill="none">
      <defs>
        <linearGradient id="bore" x1="0" y1="0" x2="0.600" y2="1">
          <stop offset="0" stopColor="#b0b0cc" />
          <stop offset="0.250" stopColor="#56565a" />
          <stop offset="0.500" stopColor="#727275" />
          <stop offset="0.800" stopColor="#9c9ca0" />
        </linearGradient>
      </defs>
      <Chain />
      <ViewCube />
      <Triad />
    </svg>
    <div className="absolute right-[3px] top-[6px] flex items-center gap-[9px] text-white">
      <button aria-label="Minimize document" className="mt-1.5 h-[3px] w-[11px] bg-[#eee]" />
      <button aria-label="Restore document">
        <svg viewBox="0 0 11 11" className="size-[11px]" fill="none" stroke="#eee" strokeWidth="1.600">
          <path d="M1 3.500h6.500V10H1zM3.500 3V1H10v7H8" />
          <path d="M3.500 6h1.500v1.500H3.500z" />
        </svg>
      </button>
      <button aria-label="Close document">
        <svg viewBox="0 0 10 10" className="size-[10px]" stroke="#eee" strokeWidth="2.500">
          <path d="m1 1 8 8M9 1 1 9" />
        </svg>
      </button>
    </div>
    <NavBar />
  </main>
);

/* ---------- app ---------- */

export default function App() {
  return (
    <div className="bg-white">
      <Grad />
      <div className="flex h-screen min-h-[640px] flex-col overflow-hidden rounded-[7px] border border-[#111] bg-[linear-gradient(180deg,#a0a0a0_0px,#959595_50px,#dcdcdc_150px,#dcdcdc_182px,#7d7d7d_186px,#8c8c8c_320px,#a2a2a2_100%)] px-[7px] pb-[6px] font-['Open_Sans','Noto_Sans',sans-serif] shadow-[inset_0_0_0_1px_#d8d8d8]">
        <Header />
        <Ribbon />
        <div className="flex min-h-0 flex-1 font-['DejaVu_Sans_Condensed','DejaVu_Sans',sans-serif]">
          <aside className="flex w-[151px] shrink-0 flex-col bg-[#f0f0f0]">
            <Grip />
            <PanelTitle title="Intent Model" />
            <div className="mx-[3px] flex h-[26px] shrink-0 items-center bg-linear-to-b from-[#f4f4f4] to-[#ededed] pl-[5px] text-[12px]">
              <button>Options...</button>
            </div>
            <IntentTree />
            <ImmediatePanel />
          </aside>
          <Viewport />
          <ModelPanel />
        </div>
        <footer className="flex h-[21px] shrink-0 items-center border-b border-[#555] bg-linear-to-b from-white via-[#e2e2e2] to-[#b0b0b0] pl-0.5 pt-0.5 font-['DejaVu_Sans_Condensed','DejaVu_Sans',sans-serif] text-[12px] text-[#111]">
          Ready
          <span className="ml-auto mr-[17px]">12</span>
          <span className="h-4 w-[38px] border-x border-[#ccc] pl-[7px] leading-4">3</span>
          <svg viewBox="0 0 8 8" className="ml-2 mr-[3px] mt-1 size-2" fill="#fff">
            <path d="M6 0h2v2H6zM3 3h2v2H3zM6 3h2v2H6zM0 6h2v2H0zM3 6h2v2H3zM6 6h2v2H6z" />
          </svg>
        </footer>
      </div>
    </div>
  );
}
